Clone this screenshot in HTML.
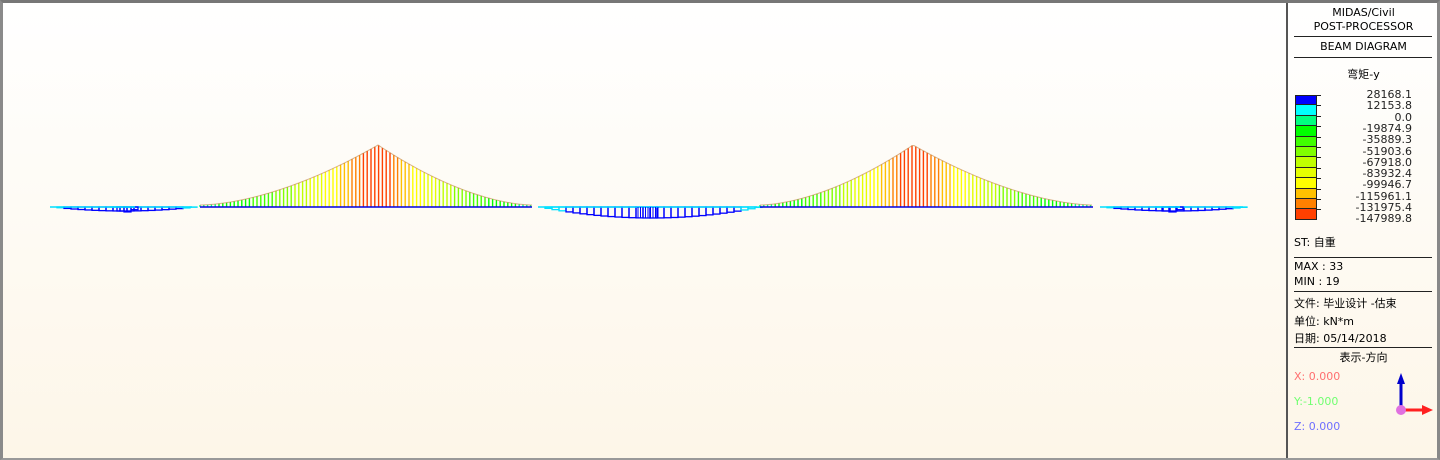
<!DOCTYPE html>
<html><head><meta charset="utf-8"><style>
body{margin:0;width:1440px;height:460px;overflow:hidden;background:#fff;font-family:"DejaVu Sans","Noto Sans CJK SC",sans-serif}
#f{position:absolute;left:0;top:0;width:1440px;height:460px;box-sizing:border-box;border-top:3px solid #777;border-left:3px solid #8a8a8a;border-right:3px solid #888;border-bottom:2px solid #999;background:linear-gradient(#ffffff,#fdf6e8)}
#p{position:absolute;left:1286px;top:3px;width:151px;height:455px;border-left:2px solid #555;font-size:11px;color:#000}
.t{position:absolute;left:0;width:151px;text-align:center}
.l{position:absolute;left:6px}
.hr{position:absolute;left:6px;width:138px;height:1px;background:#222}
</style></head><body><div id="f">
<svg width="1440" height="460" style="position:absolute;left:-3px;top:-3px" id="s"></svg>
</div>
<div id="p">
<div class="t" style="top:3px">MIDAS/Civil</div>
<div class="t" style="top:17px">POST-PROCESSOR</div>
<div class="hr" style="top:33px"></div>
<div class="t" style="top:37px">BEAM DIAGRAM</div>
<div class="hr" style="top:54px"></div>
<div class="t" style="top:63px">弯矩-y</div>
<div id="lg"></div>
<div class="l" style="top:231px">ST: 自重</div>
<div class="hr" style="top:254px"></div>
<div class="l" style="top:257px">MAX : 33</div>
<div class="l" style="top:272px">MIN : 19</div>
<div class="hr" style="top:288px"></div>
<div class="l" style="top:292px">文件: 毕业设计 -估束</div>
<div class="l" style="top:310px">单位: kN*m</div>
<div class="l" style="top:327px">日期: 05/14/2018</div>
<div class="hr" style="top:344px"></div>
<div class="t" style="top:346px">表示-方向</div>
<div class="l" style="top:367px;color:#ff7070">X: 0.000</div>
<div class="l" style="top:392px;color:#70ff70">Y:-1.000</div>
<div class="l" style="top:417px;color:#7070ff">Z: 0.000</div>
<svg style="position:absolute;left:100px;top:365px" width="50" height="55">
<line x1="13" y1="42" x2="13" y2="14" stroke="#0000cc" stroke-width="3"/>
<polygon points="9,16 17,16 13,5" fill="#0000cc"/>
<line x1="13" y1="42" x2="37" y2="42" stroke="#ff2020" stroke-width="3"/>
<polygon points="34,37 34,47 45,42" fill="#ff2020"/>
<circle cx="13" cy="42" r="5" fill="#e070e0"/>
</svg>
</div>
<script>
var cols=["#0000ff","#00ffff","#00ff80","#00ff00","#40ff00","#80ff00","#c0ff00","#e6ff00","#ffff00","#ffc000","#ff8000","#ff4000"];
var vals=["28168.1","12153.8","0.0","-19874.9","-35889.3","-51903.6","-67918.0","-83932.4","-99946.7","-115961.1","-131975.4","-147989.8"];
var h="";
for(var i=0;i<12;i++){h+='<div style="position:absolute;left:7px;top:'+(92+i*10.4)+'px;width:22px;height:10.4px;background:'+cols[i]+';box-sizing:border-box;border:1px solid #222;border-top:'+(i?0:1)+'px solid #222"></div>';
h+='<div style="position:absolute;left:29px;top:'+(92+i*10.4)+'px;width:4px;height:1px;background:#222"></div>';}
for(var i=0;i<12;i++)h+='<div style="position:absolute;right:27px;top:'+(86+i*11.3)+'px;font-size:11px;line-height:11px;color:#222">'+vals[i]+'</div>';
document.getElementById("lg").innerHTML=h;
function col(v){var r=v/60;var idx=Math.min(11,Math.max(2,Math.round(2+r*9.5)));return cols[idx];}
var s="";var Y=207;
function tower(a,p,b){for(var x=a;x<=b;x+=3.8){var t=x<p?(p-x)/(p-a):(x-p)/(b-p);var hh=60*Math.pow(1-t,1.7)+2;s+='<line x1="'+x+'" y1="'+Y+'" x2="'+x+'" y2="'+(Y-hh)+'" stroke="'+col(hh)+'" stroke-width="1.4"/>';}
var pts=[];for(var x=a;x<=b;x+=2){var t=x<p?(p-x)/(p-a):(x-p)/(b-p);var hh=60*Math.pow(1-t,1.7)+2;pts.push(x+','+(Y-hh));}
s+='<polyline points="'+pts.join(' ')+'" fill="none" stroke="#c08040" stroke-width="1" opacity="0.6"/>';
s+='<line x1="'+a+'" y1="'+Y+'" x2="'+b+'" y2="'+Y+'" stroke="#0000e0" stroke-width="1.5"/>';}
function sag(a,b,d,c){var m=(a+b)/2;for(var x=a;x<=b;x+=7){var t=Math.abs(x-m)/((b-a)/2);var dd=d*(1-t*t);var cc=dd>d*0.35?"#0000ff":"#00e0ff";s+='<rect x="'+x+'" y="'+Y+'" width="7" height="'+dd+'" fill="none" stroke="'+cc+'" stroke-width="1.3"/>';}
s+='<line x1="'+a+'" y1="'+Y+'" x2="'+b+'" y2="'+Y+'" stroke="#00e0ff" stroke-width="1.5"/>';}
sag(50,192,4);sag(110,135,5);sag(538,757,11);for(var x=638;x<660;x+=2.5)s+='<line x1="'+x+'" y1="'+Y+'" x2="'+x+'" y2="218" stroke="#0000ff"/>';
sag(1100,1243,4);sag(1155,1180,5);
tower(200,378,532);tower(760,913,1093);
document.getElementById("s").innerHTML=s;
</script>
</body></html>
